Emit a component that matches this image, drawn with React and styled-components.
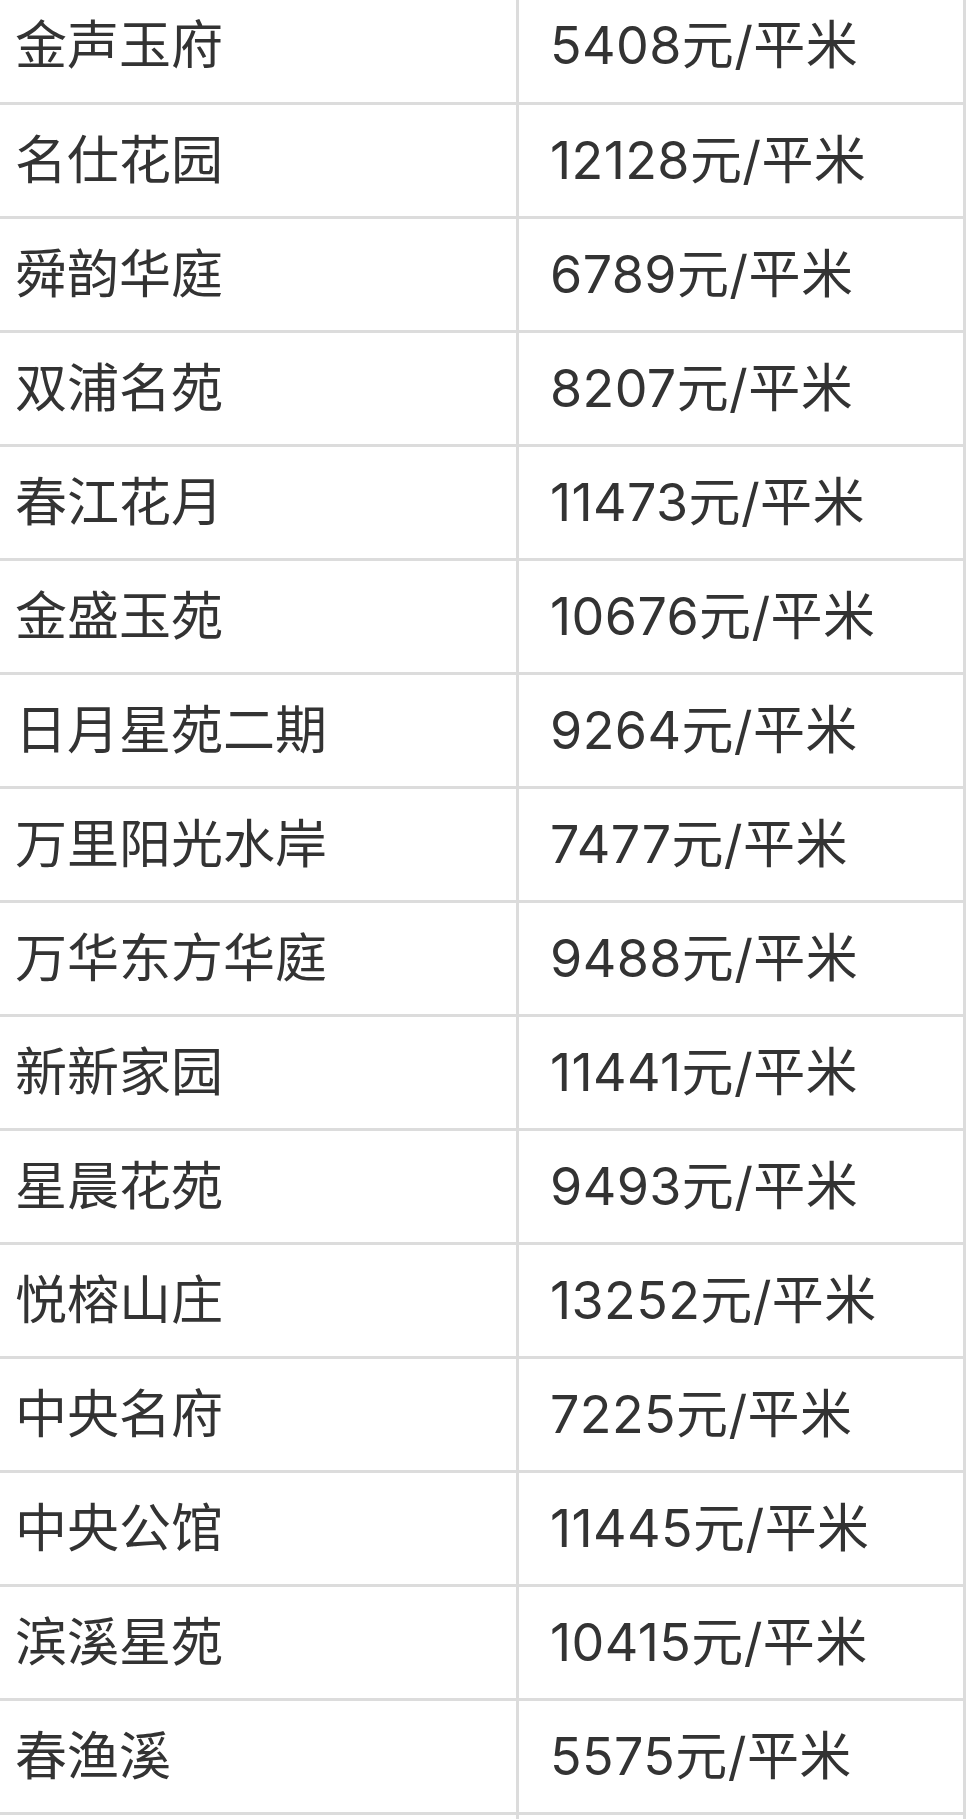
import styled, { createGlobalStyle } from "styled-components";

const ROWS = [
  ["金声玉府", "5408元/平米"],
  ["名仕花园", "12128元/平米"],
  ["舜韵华庭", "6789元/平米"],
  ["双浦名苑", "8207元/平米"],
  ["春江花月", "11473元/平米"],
  ["金盛玉苑", "10676元/平米"],
  ["日月星苑二期", "9264元/平米"],
  ["万里阳光水岸", "7477元/平米"],
  ["万华东方华庭", "9488元/平米"],
  ["新新家园", "11441元/平米"],
  ["星晨花苑", "9493元/平米"],
  ["悦榕山庄", "13252元/平米"],
  ["中央名府", "7225元/平米"],
  ["中央公馆", "11445元/平米"],
  ["滨溪星苑", "10415元/平米"],
  ["春渔溪", "5575元/平米"],
  ["", ""],
];

const Global = createGlobalStyle`
  html, body {
    margin: 0;
    padding: 0;
    background: #fff;
    overflow: hidden;
  }
`;

export default function App() {
  return (
    <>
      <Global />
      <Page>
        <Table>
          <tbody>
            {ROWS.map(([name, price], i) => (
              <Row key={i}>
                <Name>{name}</Name>
                <Price>{price}</Price>
              </Row>
            ))}
          </tbody>
        </Table>
      </Page>
    </>
  );
}

const Page = styled.div`
  width: 966px;
  height: 1819px;
  overflow: hidden;
  background: #fff;
`;

const Table = styled.table`
  width: 966px;
  margin-top: -11px;
  border-collapse: collapse;
  table-layout: fixed;
  font-family: Inter, "Noto Sans CJK SC", sans-serif;
  font-size: 52px;
  color: #333;
`;

const Row = styled.tr`
  height: 114px;
  border-bottom: 3px solid #dcdcdc;
`;

const Name = styled.td`
  width: 501px;
  padding: 0 0 8px 15px;
  border-right: 3px solid #dcdcdc;
  font-family: "Noto Sans CJK SC", sans-serif;
  white-space: nowrap;
`;

const Price = styled.td`
  padding: 0 0 8px 31px;
  border-right: 3px solid #dcdcdc;
  letter-spacing: 0.4px;
  white-space: nowrap;
`;
